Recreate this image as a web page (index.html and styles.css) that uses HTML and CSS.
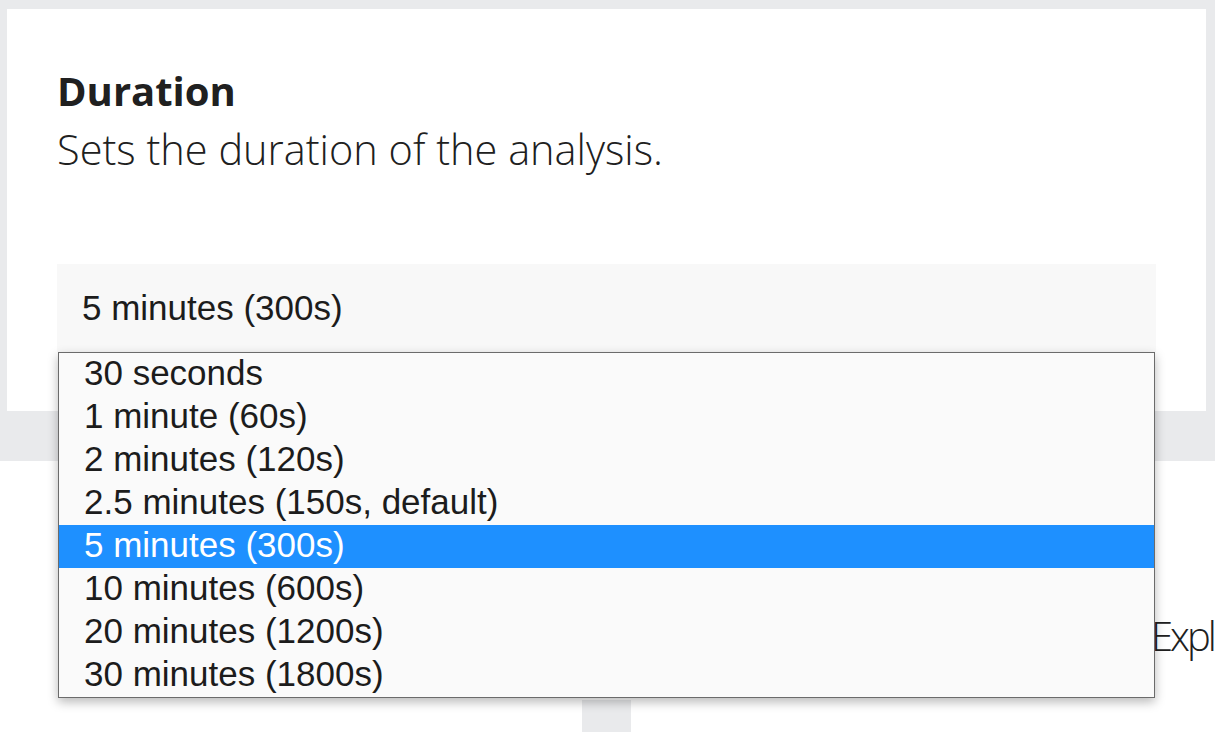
FILE: index.html
```html
<!DOCTYPE html>
<html lang="en">
<head>
<meta charset="utf-8">
<title>Duration</title>
<link rel="stylesheet" href="styles.css">
</head>
<body>
<div class="page">
  <div class="band">
    <section class="card">
      <h2 class="title">Duration</h2>
      <p class="desc">Sets the duration of the analysis.</p>
      <div class="select-wrap">
        <div class="select">5 minutes (300s)</div>
        <ul class="dropdown">
          <li class="opt">30 seconds</li>
          <li class="opt">1 minute (60s)</li>
          <li class="opt">2 minutes (120s)</li>
          <li class="opt">2.5 minutes (150s, default)</li>
          <li class="opt opt-selected">5 minutes (300s)</li>
          <li class="opt">10 minutes (600s)</li>
          <li class="opt">20 minutes (1200s)</li>
          <li class="opt">30 minutes (1800s)</li>
        </ul>
      </div>
    </section>
  </div>
  <div class="below">
    <div class="explore-row"><span class="explore">Expl</span></div>
    <div class="tab"></div>
  </div>
</div>
</body>
</html>
```

FILE: styles.css
```css
html, body {
  margin: 0;
  padding: 0;
  background: #ffffff;
  overflow: hidden;
}
.page {
  width: 1215px;
  height: 732px;
  overflow: hidden;
  font-family: "Open Sans", "Noto Sans", sans-serif;
  color: #1f1f1f;
}
.band {
  background: #e9eaec;
  padding: 9px 9px 50px 7px;
}
.card {
  background: #ffffff;
  height: 402px;
  box-sizing: border-box;
  padding: 52px 50px 0 50px;
}
.title {
  margin: 0;
  font-size: 40px;
  font-weight: 700;
  line-height: 59px;
  color: #202020;
}
.desc {
  margin: 0;
  font-size: 41.5px;
  font-weight: 300;
  line-height: 59px;
  color: #202020;
}
.select-wrap {
  position: relative;
  margin-top: 85px;
}
.select {
  background: #f8f8f8;
  height: 88px;
  box-sizing: border-box;
  padding: 1px 0 0 25px;
  line-height: 86px;
  font-family: "Liberation Sans", Arial, sans-serif;
  font-size: 35px;
  color: #1c1c1c;
}
.dropdown {
  position: absolute;
  top: 88px;
  left: 1px;
  right: 1px;
  margin: 0;
  padding: 0;
  list-style: none;
  background: #fafafa;
  border: 1px solid #6b6b6b;
  box-shadow: 0 4px 10px rgba(0, 0, 0, 0.28);
  font-family: "Liberation Sans", Arial, sans-serif;
  font-size: 35px;
  color: #1c1c1c;
}
.opt {
  height: 43px;
  box-sizing: border-box;
  line-height: 39px;
  padding: 0 0 4px 25px;
}
.opt-selected {
  background: #1e90ff;
  color: #ffffff;
}
.below {
  background: #ffffff;
  padding-top: 145px;
}
.explore-row {
  padding-left: 1151px;
  white-space: nowrap;
  height: 94px;
}
.explore {
  font-size: 40px;
  font-weight: 300;
  line-height: 59px;
  letter-spacing: -3px;
  color: #202020;
}
.tab {
  margin-left: 582px;
  width: 49px;
  height: 40px;
  background: #e9eaec;
}
```
